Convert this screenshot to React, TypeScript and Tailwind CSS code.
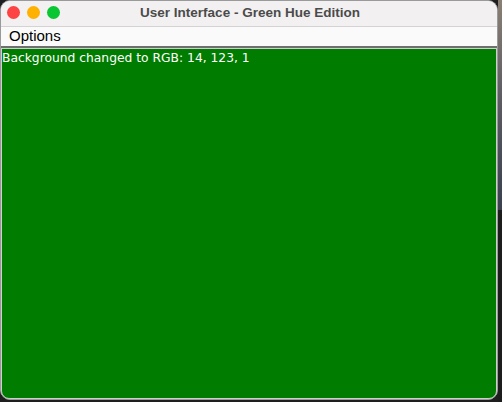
export default function App() {
  return (
    <div className="flex h-[402px] w-[502px] overflow-hidden bg-[#1e1e1e]">
      {/* window */}
      <div className="flex h-[400px] w-[498px] flex-col overflow-hidden rounded-[10px] border border-[#9a9a9a] bg-[#f0eeee]">
        {/* title bar */}
        <div className="relative flex h-[26px] shrink-0 items-center justify-center border-b border-[#d4d2d2] bg-[#f2f0f0]">
          <div className="absolute left-[6px] top-[5px] flex gap-[7px]">
            <span className="h-[13px] w-[13px] rounded-full bg-[#fd4343]" />
            <span className="h-[13px] w-[13px] rounded-full bg-[#feb100]" />
            <span className="h-[13px] w-[13px] rounded-full bg-[#0ac632]" />
          </div>
          <span className="pl-[2px] font-['Liberation_Sans',sans-serif] text-[13.5px] font-bold text-[#4b4b4b]">
            User Interface - Green Hue Edition
          </span>
        </div>
        {/* menu bar */}
        <div className="flex h-[21px] shrink-0 items-center border-b-2 border-[#6e6e6e] bg-[#fafafa] px-[8px]">
          <span className="font-['Liberation_Sans',sans-serif] text-[15px] text-black">Options</span>
        </div>
        {/* content */}
        <div className="flex-1 rounded-b-[8px] border border-[#cfcfcf] bg-[#007c00] pt-[1px]">
          <p className="font-['DejaVu_Sans',sans-serif] text-[12.3px] leading-[16px] text-white">
            Background changed to RGB: 14, 123, 1
          </p>
        </div>
      </div>
      {/* desktop edge */}
      <div className="flex w-[4px] flex-col">
        <div className="h-[210px] bg-gradient-to-b from-[#8a7f74] via-[#5a5a62] to-[#3a4050]" />
        <div className="flex-1 bg-[#1c1c1c]" />
      </div>
    </div>
  );
}
